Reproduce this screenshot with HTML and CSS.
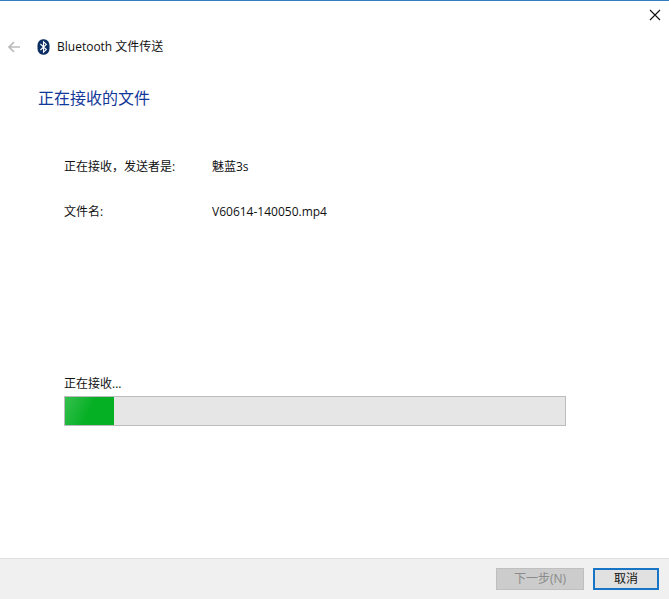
FILE: index.html
```html
<!DOCTYPE html>
<html lang="zh-CN">
<head>
<meta charset="utf-8">
<meta name="viewport" content="width=device-width, initial-scale=1">
<title>Bluetooth 文件传送</title>
<link rel="stylesheet" href="styles.css">
</head>
<body>
<div class="wizard">
  <div class="titlebar">
    <button class="close" type="button" aria-label="关闭">
      <svg width="12" height="12" viewBox="0 0 12 12" aria-hidden="true"><path d="M1 1L11 11M11 1L1 11" fill="none" stroke="#111" stroke-width="1.1"/></svg>
    </button>
  </div>
  <header class="header">
    <button class="back" type="button" aria-label="返回" disabled>
      <svg width="14" height="12" viewBox="0 0 14 12" aria-hidden="true"><path d="M12 6H1.2M6 1.2L1 6L6 10.8" fill="none" stroke="#bcbcbc" stroke-width="1.7"/></svg>
    </button>
    <svg class="logo" width="13" height="16" viewBox="0 0 13 16" aria-hidden="true"><rect x="0.5" y="0.3" width="12" height="15.4" rx="5.4" ry="6" fill="#0b2f62"/><path d="M3.4 5L9.3 10.6L6.5 13.2V2.8L9.3 5.4L3.4 11" fill="none" stroke="#fff" stroke-width="1.1"/></svg>
    <span class="app-name">Bluetooth 文件传送</span>
  </header>
  <main class="content">
    <h1 class="heading">正在接收的文件</h1>
    <dl class="details">
      <dt>正在接收，发送者是:</dt><dd>魅蓝3s</dd>
      <dt>文件名:</dt><dd>V60614-140050.mp4</dd>
    </dl>
    <div class="transfer">
      <label for="receive-progress">正在接收...</label>
      <progress id="receive-progress" class="bar" value="9.8" max="100"></progress>
    </div>
  </main>
  <footer class="footer">
    <button class="button" type="button" disabled>下一步(N)</button>
    <button class="button button-default" type="button">取消</button>
  </footer>
</div>
</body>
</html>
```
FILE: styles.css
```css
* {
  box-sizing: border-box;
}

body {
  margin: 0;
  background: #fff;
  color: #111;
  font: 12px/18px "Open Sans", "Noto Sans CJK SC", sans-serif;
}

button {
  padding: 0;
  border: 0;
  background: transparent;
  color: inherit;
  font: inherit;
}

svg {
  display: block;
}

.wizard {
  display: flex;
  flex-direction: column;
  min-height: 100vh;
  border-top: 1px solid #2f7fc1;
}

.titlebar {
  display: flex;
  justify-content: flex-end;
  height: 28px;
  padding: 0 8px;
}

.close {
  display: flex;
  align-items: center;
}

.header {
  display: flex;
  align-items: center;
  height: 36px;
  padding: 0 8px;
}

.logo {
  margin: 0 7px 0 15px;
}

.content {
  flex: 1;
  padding: 21px 103px 24px 64px;
}

.heading {
  margin: 0 0 0 -26px;
  color: #12389a;
  font-size: 16px;
  font-weight: 400;
  line-height: 24px;
}

.details {
  display: grid;
  grid-template-columns: 148px 1fr;
  row-gap: 27px;
  margin: 48px 0 0;
}

.details dd {
  margin: 0;
}

.transfer {
  display: flex;
  flex-direction: column;
  gap: 3px;
  margin-top: 154px;
}

.bar {
  display: block;
  width: 100%;
  height: 30px;
  border: 1px solid #bcbcbc;
  background: #e6e6e6;
  appearance: none;
}

.bar::-webkit-progress-bar {
  background: #e6e6e6;
}

.bar::-webkit-progress-value {
  background: linear-gradient(115deg, #36c04e, #06b025 50%);
}

.footer {
  display: flex;
  justify-content: flex-end;
  gap: 9px;
  padding: 9px 10px;
  border-top: 1px solid #dfdfdf;
  background: #f0f0f0;
}

.button {
  width: 88px;
  height: 22px;
  border: 1px solid #bfbfbf;
  background: #ccc;
  color: #8a8a8a;
  line-height: 18px;
}

.button-default {
  width: 66px;
  border: 2px solid #1874c4;
  background: #e1e1e1;
  color: #111;
}
```
